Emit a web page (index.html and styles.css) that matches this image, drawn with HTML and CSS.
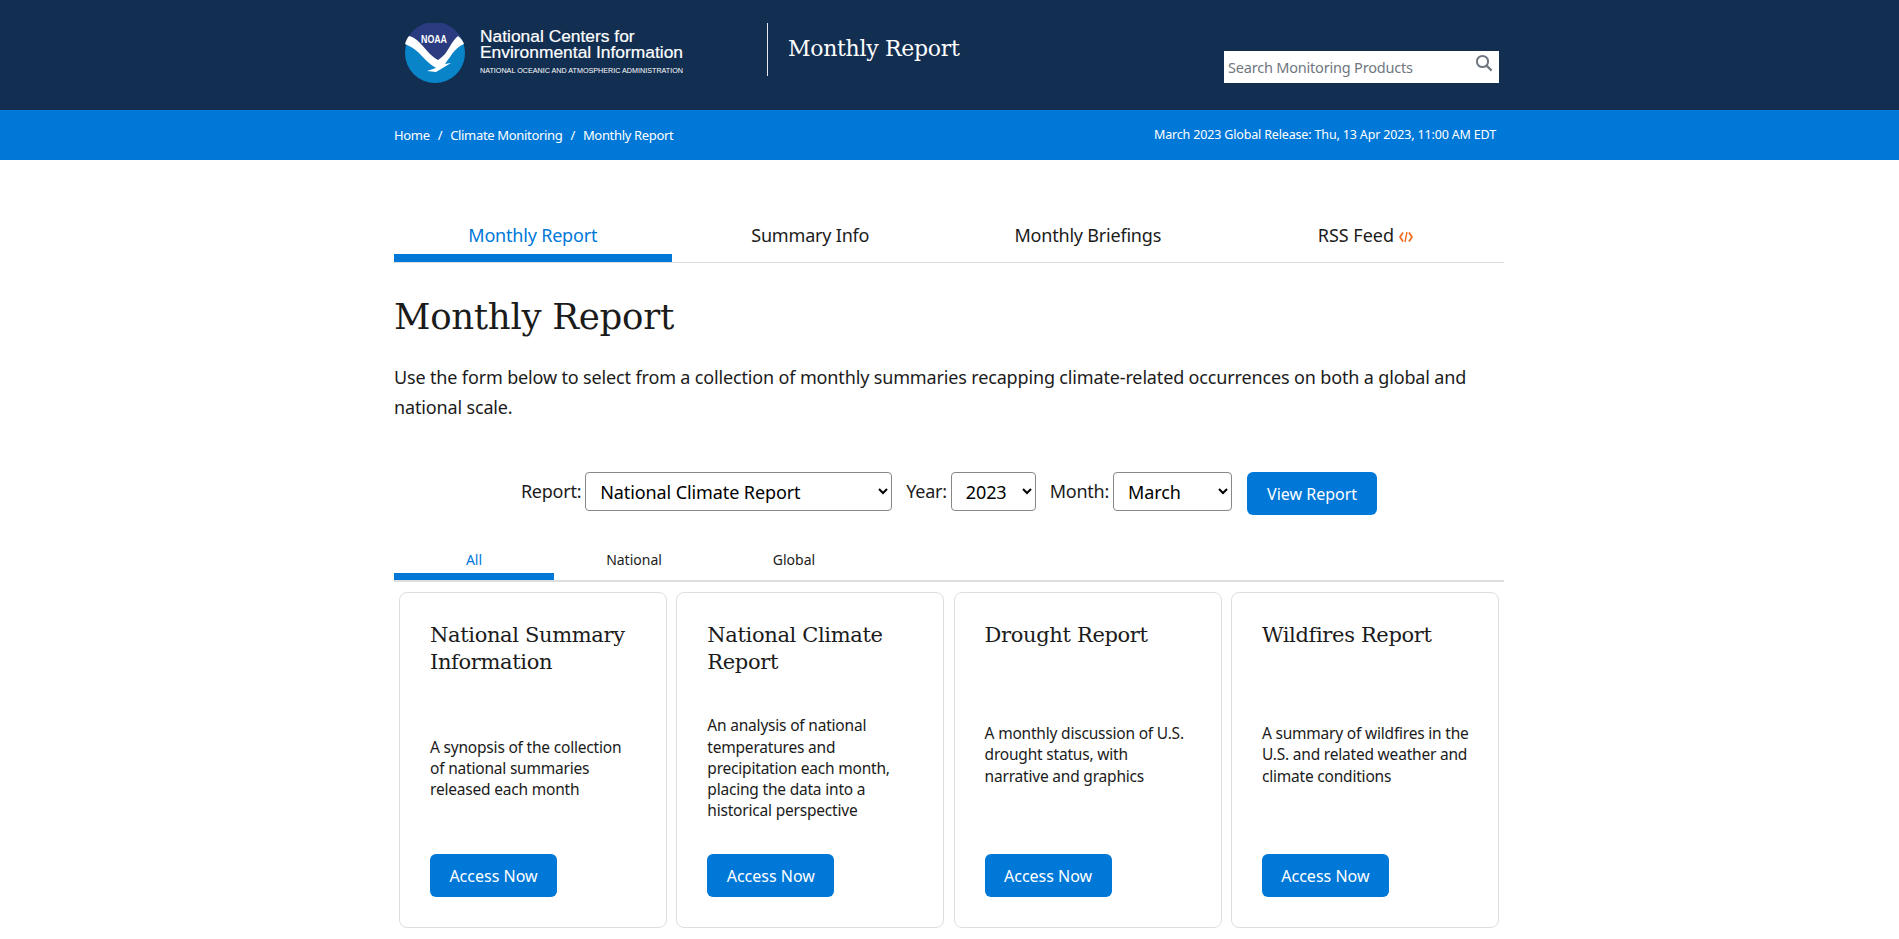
FILE: index.html
```html
<!DOCTYPE html>
<html lang="en">
<head>
<meta charset="utf-8">
<title>Monthly Report</title>
<link rel="stylesheet" href="styles.css">
</head>
<body>
<header class="masthead">
  <div class="wrap masthead-inner">
    <a class="logo" href="#">
      <svg class="noaa" viewBox="0 0 60 60" width="60" height="60" aria-hidden="true">
        <circle cx="30" cy="30" r="30" fill="#0A84C9"/>
        <path d="M4 13A30 30 0 0 1 56 15L47 31L36 42L16 30L2 20Z" fill="#2A3B80"/>
        <path d="M4 13C13 15 18 24 25 31C28 34 31 36 33 37C36 35 38 33 40 31C44 26 47 18 53 13C56 15 58 18 59 21C54 23 50 27 47 31C45 34 42 38 40 41L46 40L36 46L31 49L22 48L31 45C24 41 19 35 14 30C10 26 5 23 0 21C1 18 2 15 4 13Z" fill="#fff"/>
        <text class="noaa-word" x="16" y="20" textLength="26" lengthAdjust="spacingAndGlyphs">NOAA</text>
      </svg>
      <span class="logo-text">
        <span class="logo-line">National Centers for</span>
        <span class="logo-line">Environmental Information</span>
        <span class="logo-sub">NATIONAL OCEANIC AND ATMOSPHERIC ADMINISTRATION</span>
      </span>
    </a>
    <div class="site-title">Monthly Report</div>
    <form class="search">
      <span class="search-text">Search Monitoring Products</span>
      <svg class="search-icon" viewBox="0 0 18 18" width="18" height="18" aria-hidden="true"><circle cx="7.5" cy="7.5" r="5.6" fill="none" stroke="#6f7780" stroke-width="2"/><path d="M11.6 11.6L16.6 16.6" stroke="#6f7780" stroke-width="2.2" fill="none"/></svg>
    </form>
  </div>
</header>
<div class="crumbbar">
  <div class="wrap crumb-inner">
    <nav class="crumbs"><a href="#">Home</a><span class="sep">/</span><a href="#">Climate Monitoring</a><span class="sep">/</span><a href="#">Monthly Report</a></nav>
    <div class="release">March 2023 Global Release: Thu, 13 Apr 2023, 11:00 AM EDT</div>
  </div>
</div>
<main class="wrap content">
  <nav class="tabs">
    <a class="tab active" href="#">Monthly Report</a>
    <a class="tab" href="#">Summary Info</a>
    <a class="tab" href="#">Monthly Briefings</a>
    <a class="tab tab-rss" href="#">RSS Feed <svg class="rss" viewBox="0 0 14 12" width="14" height="12" aria-hidden="true"><path d="M4 1.5L1 6L4 10.5M10 1.5L13 6L10 10.5" fill="none" stroke="#F26B1D" stroke-width="1.8"/><path d="M8 1L6 11" fill="none" stroke="#F26B1D" stroke-width="1.4"/></svg></a>
  </nav>
  <h1 class="title">Monthly Report</h1>
  <p class="lead">Use the form below to select from a collection of monthly summaries recapping climate-related occurrences on both a global and national scale.</p>
  <form class="picker">
    <label class="pick-label">Report:</label>
    <select class="pick pick-report"><option>National Climate Report</option></select>
    <label class="pick-label year">Year:</label>
    <select class="pick pick-year"><option>2023</option></select>
    <label class="pick-label month">Month:</label>
    <select class="pick pick-month"><option>March</option></select>
    <button class="btn view" type="button">View Report</button>
  </form>
  <nav class="subtabs">
    <a class="subtab active" href="#">All</a>
    <a class="subtab" href="#">National</a>
    <a class="subtab" href="#">Global</a>
  </nav>
  <section class="cards">
    <article class="card">
      <h2 class="card-title">National Summary Information</h2>
      <p class="card-text">A synopsis of the collection of national summaries released each month</p>
      <a class="btn access" href="#">Access Now</a>
    </article>
    <article class="card">
      <h2 class="card-title">National Climate Report</h2>
      <p class="card-text">An analysis of national temperatures and precipitation each month, placing the data into a historical perspective</p>
      <a class="btn access" href="#">Access Now</a>
    </article>
    <article class="card">
      <h2 class="card-title">Drought Report</h2>
      <p class="card-text">A monthly discussion of U.S. drought status, with narrative and graphics</p>
      <a class="btn access" href="#">Access Now</a>
    </article>
    <article class="card">
      <h2 class="card-title">Wildfires Report</h2>
      <p class="card-text">A summary of wildfires in the U.S. and related weather and climate conditions</p>
      <a class="btn access" href="#">Access Now</a>
    </article>
  </section>
</main>
</body>
</html>
```
FILE: styles.css
```css
* { box-sizing: border-box; }
html, body { margin: 0; height: 939px; overflow: hidden; }
body { background: #fff; color: #1b1b1b; font-family: "Noto Sans", "Liberation Sans", sans-serif; }
a { color: inherit; text-decoration: none; }
.wrap { width: 1110px; margin: 0 395px 0 394px; }

.masthead { background: #122e51; height: 110px; }
.masthead-inner { display: flex; align-items: flex-start; height: 110px; }
.logo { display: flex; align-items: flex-start; padding: 23px 0 0 11px; width: 373px; height: 110px; color: #fff; }
.noaa { flex: none; }
.noaa-word { font: bold 10px "Liberation Sans", sans-serif; fill: #fff; }
.logo-text { display: flex; flex-direction: column; margin: 6px 0 0 15px; font-family: "Liberation Sans", sans-serif; }
.logo-line { font-size: 17.4px; line-height: 15.5px; white-space: nowrap; -webkit-text-stroke: .2px #fff; }
.logo-sub { font-size: 7.2px; line-height: 8px; margin-top: 7px; white-space: nowrap; }
.site-title { border-left: 1px solid #e6e9ee; margin-top: 23px; height: 53px; padding: 11px 0 0 20px; color: #fff; font: 22px/30px "DejaVu Serif", serif; width: 457px; letter-spacing: -.3px; }
.search { width: 275px; height: 32px; margin-top: 51px; background: #fff; display: flex; align-items: center; justify-content: space-between; padding: 0 6px 0 4px; }
.search-text { font-size: 14.5px; letter-spacing: -.2px; color: #6f7780; }
.search-icon { margin-top: -8px; }

.crumbbar { background: #0078d8; height: 50px; color: #fff; font-size: 13px; letter-spacing: -.33px; }
.crumb-inner { display: flex; justify-content: space-between; align-items: center; height: 50px; padding-right: 8px; }
.sep { margin: 0 8px; }
.release { margin-top: -2px; font-size: 12.5px; letter-spacing: -.16px; }

.content { padding-top: 60px; }
.tabs { display: grid; grid-template-columns: repeat(4, 1fr); border-bottom: 1px solid #dcdee0; height: 43px; letter-spacing: -.2px; }
.tab { text-align: center; font-size: 18px; line-height: 24px; height: 42px; padding-top: 3px; }
.tab.active { color: #0078d8; border-bottom: 8px solid #0078d8; }
.tab-rss { letter-spacing: 0; }
.rss { vertical-align: -1px; }
.title { font: 400 35.6px/48px "DejaVu Serif", serif; margin: 30px 0 0; letter-spacing: -.3px; }
.lead { font-size: 18px; line-height: 30px; margin: 21px 0 0; letter-spacing: -.15px; }
.picker { display: flex; align-items: flex-start; justify-content: center; height: 43px; margin-top: 50px; }
.pick-label { font-size: 18px; line-height: 38px; margin-right: 4px; letter-spacing: -.25px; }
.pick-label.year, .pick-label.month { margin-left: 14px; }
.pick { height: 39px; font: 18px "Noto Sans", sans-serif; letter-spacing: -.1px; color: #000; background: #fff; border: 1px solid #888; border-radius: 4px; padding: 0 10px; }
.pick-report { width: 307px; }
.pick-year { width: 85px; }
.pick-month { width: 119px; }
.btn { background: #0078d8; color: #fff; border: 0; border-radius: 6px; font: 16px "Noto Sans", sans-serif; display: inline-flex; align-items: center; justify-content: center; }
.view { width: 130px; height: 43px; margin-left: 15px; }
.subtabs { display: grid; grid-template-columns: 160px 160px 160px; border-bottom: 2px solid #dcdee0; height: 42px; margin-top: 25px; }
.subtab { text-align: center; font-size: 14px; padding-top: 9px; height: 40px; line-height: 22px; }
.subtab.active { color: #0078d8; border-bottom: 7px solid #0078d8; }
.cards { display: grid; grid-template-columns: repeat(4, 268px); gap: 9.3px; padding: 10px 5px 0; }
.card { height: 336px; border: 1px solid #dcdee0; border-radius: 8px; padding: 29px 28px 30px 30px; display: flex; flex-direction: column; }
.card-title { font: 400 21px/27px "DejaVu Serif", serif; margin: 0; letter-spacing: -.35px; }
.card-text { font-size: 15.5px; line-height: 21.2px; letter-spacing: -.2px; margin: 7px 0 0; flex: 1; display: flex; align-items: center; }
.access { width: 127px; height: 43px; flex: none; }
```
